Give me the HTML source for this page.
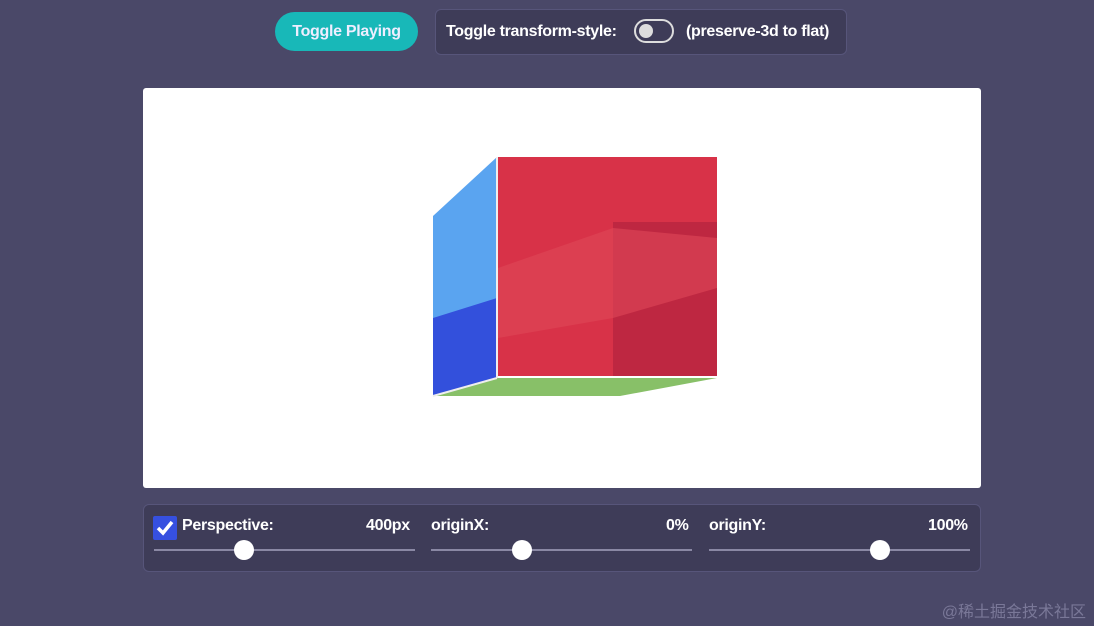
<!DOCTYPE html><html><head><style>
body{margin:0;width:1094px;height:626px;background:#4a4868;font-family:"Liberation Sans",sans-serif;position:relative;overflow:hidden;color:#fff;font-weight:bold}
.btn{position:absolute;left:275px;top:12px;width:143px;height:39px;border-radius:20px;background:#18b8b8;color:#eef;font-size:16px;line-height:39px;text-align:center;letter-spacing:-0.3px}
.tog{position:absolute;left:435px;top:9px;width:412px;height:46px;border-radius:6px;background:#3e3c58;border:1px solid #57557a;box-sizing:border-box;font-size:16px;line-height:44px;letter-spacing:-0.3px}
.stage{position:absolute;left:143px;top:88px;width:838px;height:400px;background:#fff;border-radius:3px}
.ctl{position:absolute;left:143px;top:504px;width:838px;height:68px;background:#3e3c58;border:1px solid #57557a;border-radius:6px;box-sizing:border-box;font-size:16px;letter-spacing:-0.3px}
.t{position:absolute;top:12px}
.track{position:absolute;height:2px;background:#8a88a4;top:44px}
.th{position:absolute;width:20px;height:20px;border-radius:50%;background:#fff;top:35px}
</style></head><body>
<div class="btn">Toggle Playing</div>
<div class="tog"><span style="position:absolute;left:10px">Toggle transform-style:</span>
<div style="position:absolute;left:198px;top:9px;width:40px;height:24px;border:2px solid #ddd;border-radius:14px;box-sizing:border-box"><div style="position:absolute;left:3px;top:3px;width:14px;height:14px;border-radius:50%;background:#ddd"></div></div>
<span style="position:absolute;left:250px">(preserve-3d to flat)</span></div>
<div class="stage">
<svg width="838" height="400" style="position:absolute;left:0;top:0">
<polygon points="290,128 354,69 354,290 290,308" fill="#5aa4f0"/>
<polygon points="290,230 354,210 354,290 290,308" fill="#3350dc"/>
<polygon points="290,308 354,290 574,290 477,308" fill="#88c068"/>
<rect x="355" y="69" width="219" height="219" fill="#d83248"/>
<rect x="470" y="134" width="104" height="154" fill="#b82440" opacity=".8"/>
<polygon points="355,180 470,140 574,150 574,200 470,230 355,250" fill="#e04858" opacity=".6"/>
<line x1="354" y1="69" x2="354" y2="290" stroke="#eee" stroke-width="2"/>
<line x1="290" y1="308" x2="354" y2="290" stroke="#eee" stroke-width="2"/>
</svg></div>
<div class="ctl">
<div style="position:absolute;left:9px;top:11px;width:24px;height:24px;background:#3650e0;border-radius:2px">
<svg width="24" height="24"><path d="M5 12 L10 17 L19 6" stroke="#fff" stroke-width="3.5" fill="none"/></svg></div>
<span class="t" style="left:38px">Perspective:</span><span class="t" style="left:222px">400px</span>
<div class="track" style="left:10px;width:261px"></div><div class="th" style="left:90px"></div>
<span class="t" style="left:287px">originX:</span><span class="t" style="left:522px">0%</span>
<div class="track" style="left:287px;width:261px"></div><div class="th" style="left:368px"></div>
<span class="t" style="left:565px">originY:</span><span class="t" style="left:784px">100%</span>
<div class="track" style="left:565px;width:261px"></div><div class="th" style="left:726px"></div>
</div>
<div style="position:absolute;right:8px;top:598px;font-size:16px;color:#7a7898;font-weight:normal;font-family:'Liberation Sans','Noto Sans CJK SC',sans-serif">@稀土掘金技术社区</div>
</body></html>
